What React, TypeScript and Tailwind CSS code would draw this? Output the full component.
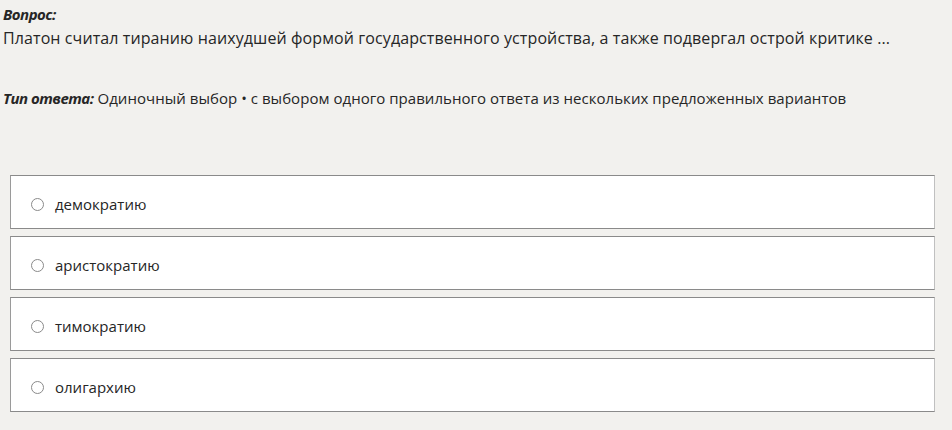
import React from "react";

const options = ["демократию", "аристократию", "тимократию", "олигархию"];

export default function App() {
  return (
    <div
      className="w-[952px] h-[430px] bg-[#f2f1ee] text-[#262626] overflow-hidden"
      style={{ fontFamily: '"Open Sans", "Noto Sans", sans-serif' }}
    >
      <div className="pl-[3px] pt-[4px]">
        <div className="text-[15px] leading-[20px] font-bold italic tracking-[-0.5px]">Вопрос:</div>
        <div className="text-[16px] leading-[24px] mt-[2px] tracking-[0.1px]">
          Платон считал тиранию наихудшей формой государственного устройства, а также подвергал острой критике ...
        </div>
        <div className="text-[15px] leading-[24px] mt-[36px] tracking-[0.04px]">
          <span className="font-bold italic tracking-[-0.5px]">Тип ответа:</span> Одиночный выбор • с выбором одного
          правильного ответа из нескольких предложенных вариантов
        </div>
      </div>
      <div className="ml-[10px] w-[925px] mt-[65px] flex flex-col gap-[7px]">
        {options.map((o) => (
          <div
            key={o}
            className="h-[54px] bg-white border border-[#8a8a8a] border-r-[#c0c0c0] border-l-[#9a9a9a] flex items-center pl-[20px]"
          >
            <span className="w-[13px] h-[13px] rounded-full border border-[#8a8a8a] bg-white shrink-0 mt-[4px]" />
            <span className="ml-[11px] text-[15px] leading-[20px] mt-[4px]">{o}</span>
          </div>
        ))}
      </div>
    </div>
  );
}
